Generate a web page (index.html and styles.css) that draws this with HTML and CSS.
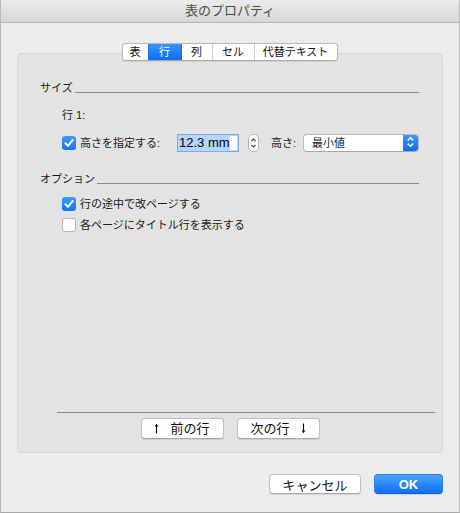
FILE: index.html
```html
<!DOCTYPE html>
<html lang="ja">
<head>
<meta charset="utf-8">
<title>表のプロパティ</title>
<link rel="stylesheet" href="styles.css">
</head>
<body>
<div class="window">
  <div class="titlebar">表のプロパティ</div>
  <div class="content">
    <div class="tabs">
      <span class="tab t1">表</span>
      <span class="tab t2 selected">行</span>
      <span class="tab t3">列</span>
      <span class="tab t4">セル</span>
      <span class="tab t5">代替テキスト</span>
    </div>
    <div class="panel">
      <div class="panel-body">
        <div class="group-head"><span class="group-title">サイズ</span><span class="rule"></span></div>
        <div class="row-label">行 1:</div>
        <div class="ctrl-row">
          <span class="checkbox checked">
            <svg width="14" height="14" viewBox="0 0 14 14"><path d="M3.4 7.3 L5.9 9.8 L10.6 4.1" fill="none" stroke="#fff" stroke-width="2" stroke-linecap="round" stroke-linejoin="round"/></svg>
          </span>
          <span class="field-label">高さを指定する:</span>
          <span class="textfield"><span class="sel">12.3 mm</span></span>
          <span class="stepper">
            <svg width="11" height="18" viewBox="0 0 11 18"><path d="M3.5 7 L5.5 5 L7.5 7" fill="none" stroke="#444" stroke-width="1.1"/><path d="M3.5 11 L5.5 13 L7.5 11" fill="none" stroke="#444" stroke-width="1.1"/></svg>
          </span>
          <span class="height-label">高さ:</span>
          <span class="popup">
            <span class="popup-text">最小値</span>
            <span class="popup-arrows">
              <svg width="15" height="18" viewBox="0 0 15 18"><path d="M4.8 7.4 L7.5 4.8 L10.2 7.4" fill="none" stroke="#fff" stroke-width="1.5"/><path d="M4.8 10.6 L7.5 13.2 L10.2 10.6" fill="none" stroke="#fff" stroke-width="1.5"/></svg>
            </span>
          </span>
        </div>
        <div class="group-head opt-head"><span class="group-title">オプション</span><span class="rule"></span></div>
        <div class="check-row first">
          <span class="checkbox checked">
            <svg width="14" height="14" viewBox="0 0 14 14"><path d="M3.4 7.3 L5.9 9.8 L10.6 4.1" fill="none" stroke="#fff" stroke-width="2" stroke-linecap="round" stroke-linejoin="round"/></svg>
          </span>
          <span class="check-text">行の途中で改ページする</span>
        </div>
        <div class="check-row second">
          <span class="checkbox"></span>
          <span class="check-text">各ページにタイトル行を表示する</span>
        </div>
      </div>
      <div class="panel-foot">
        <div class="foot-rule"></div>
        <div class="nav-buttons">
          <span class="button nav">
            <svg class="arrow up" width="5" height="11" viewBox="0 0 5 11"><path d="M2.5 1.5 V10.5" stroke="#111" stroke-width="1.1"/><path d="M0.6 3.6 L2.5 0.8 L4.4 3.6 Z" fill="#111"/></svg>
            <span>前の行</span>
          </span>
          <span class="button nav">
            <span>次の行</span>
            <svg class="arrow down" width="5" height="11" viewBox="0 0 5 11"><path d="M2.5 0.5 V9.5" stroke="#111" stroke-width="1.1"/><path d="M0.6 7.4 L2.5 10.2 L4.4 7.4 Z" fill="#111"/></svg>
          </span>
        </div>
      </div>
    </div>
    <div class="dialog-buttons">
      <span class="button cancel">キャンセル</span>
      <span class="button ok">OK</span>
    </div>
  </div>
</div>
</body>
</html>
```
FILE: styles.css
```css
html, body {
  margin: 0;
  padding: 0;
  background: #ececec;
}
body {
  font-family: "Liberation Sans", "Noto Sans CJK JP", sans-serif;
  font-size: 11px;
  color: #1b1b1b;
}
.window {
  width: 460px;
  height: 513px;
  box-sizing: border-box;
  border-left: 1px solid #b8b8b8;
  border-right: 1px solid #b8b8b8;
  border-bottom: 1px solid #a8a8a8;
  background: #ececec;
  display: flex;
  flex-direction: column;
}
.titlebar {
  height: 22px;
  border-bottom: 1px solid #b6b6b6;
  background: linear-gradient(#ececec, #d6d6d6);
  text-align: center;
  font-size: 13px;
  line-height: 22px;
  color: #4b4b4b;
  border-top-left-radius: 5px;
  border-top-right-radius: 5px;
}
.content {
  padding: 20px 16px 0 16px;
  display: flex;
  flex-direction: column;
}
.tabs {
  align-self: center;
  display: flex;
  height: 18px;
  box-sizing: border-box;
  border: 1px solid #b9b9b9;
  border-bottom-color: #a9a9a9;
  border-radius: 4px;
  background: #fff;
  overflow: hidden;
  position: relative;
  z-index: 1;
  margin-left: -1px;
  box-shadow: 0 0.5px 1px rgba(0,0,0,0.08);
}
.tab {
  display: flex;
  align-items: center;
  justify-content: center;
  height: 16px;
  line-height: 16px;
  color: #111;
  border-left: 1px solid #d0d0d0;
}
.tab.t1 { width: 25px; border-left: none; }
.tab.t2 { width: 32px; }
.tab.t3 { width: 30px; }
.tab.t4 { width: 41px; }
.tab.t5 { width: 82px; }
.tab.selected {
  background: linear-gradient(#3795fd, #0b6ef6);
  color: #fff;
  border-left-color: #1a73f0;
}
.tab.selected + .tab { border-left-color: #1a73f0; }
.panel {
  margin-top: -8px;
  height: 400px;
  box-sizing: border-box;
  background: #e3e3e3;
  border: 1px solid #d8d8d8;
  border-radius: 4px;
  display: flex;
  flex-direction: column;
}
.panel-body {
  padding: 26px 23px 0 22px;
  display: flex;
  flex-direction: column;
}
.group-head {
  display: flex;
  align-items: flex-end;
  height: 16px;
  line-height: 16px;
}
.group-title {
  line-height: 16px;
}
.rule {
  flex: 1;
  height: 1px;
  background: #8c8c8c;
  margin: 0 0 3px 2px;
}
.row-label {
  margin: 11px 0 0 22px;
  height: 16px;
  line-height: 16px;
}
.ctrl-row {
  margin: 10px 0 0 22px;
  height: 20px;
  display: flex;
  align-items: center;
}
.checkbox {
  width: 14px;
  height: 14px;
  box-sizing: border-box;
  border-radius: 3px;
  background: #fff;
  border: 1px solid #b3b3b3;
  flex: none;
  display: flex;
}
.checkbox.checked {
  background: linear-gradient(#3f9bfd, #1273f6);
  border: none;
}
.field-label {
  margin-left: 4px;
  width: 97px;
  line-height: 16px;
}
.textfield {
  width: 62px;
  height: 18px;
  box-sizing: border-box;
  background: #fff;
  border: 1px solid #7eabee;
  box-shadow: inset 0 0 0 1px rgba(140, 185, 245, 0.6);
  font-size: 13px;
  line-height: 14px;
  display: flex;
  align-items: center;
  padding-left: 1px;
  color: #000;
}
.sel {
  background: #b4d5fe;
  line-height: 14px;
}
.stepper {
  margin-left: 9px;
  width: 11px;
  height: 18px;
  box-sizing: border-box;
  border: 1px solid #b5b5b5;
  border-radius: 5px;
  background: #fff;
  display: flex;
  align-items: center;
  justify-content: center;
  overflow: hidden;
}
.stepper svg { flex: none; }
.height-label {
  margin-left: 12px;
  margin-right: 7px;
  line-height: 16px;
}
.popup {
  width: 116px;
  height: 18px;
  box-sizing: border-box;
  border: 1px solid #b9b9b9;
  border-bottom-color: #a6a6a6;
  border-radius: 4px;
  background: #fff;
  display: flex;
  overflow: hidden;
  margin-top: -1px;
}
.popup-text {
  flex: 1;
  padding-left: 8px;
  line-height: 16px;
}
.popup-arrows {
  width: 15px;
  background: linear-gradient(#3a97fd, #0c6ef6);
  display: flex;
  align-items: center;
  justify-content: center;
}
.popup-arrows svg { flex: none; margin-top: -1px; }
.opt-head {
  margin-top: 18px;
}
.check-row {
  display: flex;
  align-items: center;
  height: 16px;
  margin-left: 22px;
}
.check-row.first { margin-top: 9px; }
.check-row.second { margin-top: 5px; }
.check-text {
  margin-left: 4px;
  line-height: 16px;
}
.panel-foot {
  margin-top: auto;
  display: flex;
  flex-direction: column;
}
.foot-rule {
  height: 1px;
  background: #8c8c8c;
  margin: 0 7px 0 39px;
}
.nav-buttons {
  display: flex;
  justify-content: center;
  gap: 13px;
  margin-top: 5px;
  padding-bottom: 13px;
}
.button {
  display: flex;
  align-items: center;
  justify-content: center;
  box-sizing: border-box;
  background: #fff;
  border: 1px solid #c3c3c3;
  border-bottom-color: #a9a9a9;
  border-radius: 4px;
  box-shadow: 0 0.5px 1px rgba(0,0,0,0.1);
  font-size: 13px;
  color: #111;
}
.button.nav {
  width: 83px;
  height: 21px;
  line-height: 19px;
  gap: 11px;
}
.arrow { flex: none; }
.dialog-buttons {
  display: flex;
  justify-content: flex-end;
  gap: 13px;
  margin-top: 21px;
}
.button.cancel {
  width: 92px;
  height: 20px;
}
.button.ok {
  width: 69px;
  height: 20px;
  background: linear-gradient(#4ba3fe, #0d6ff6);
  border: 1px solid #2a7ff3;
  border-bottom-color: #0a5fe0;
  color: #fff;
  font-weight: bold;
  font-size: 13px;
}
```
